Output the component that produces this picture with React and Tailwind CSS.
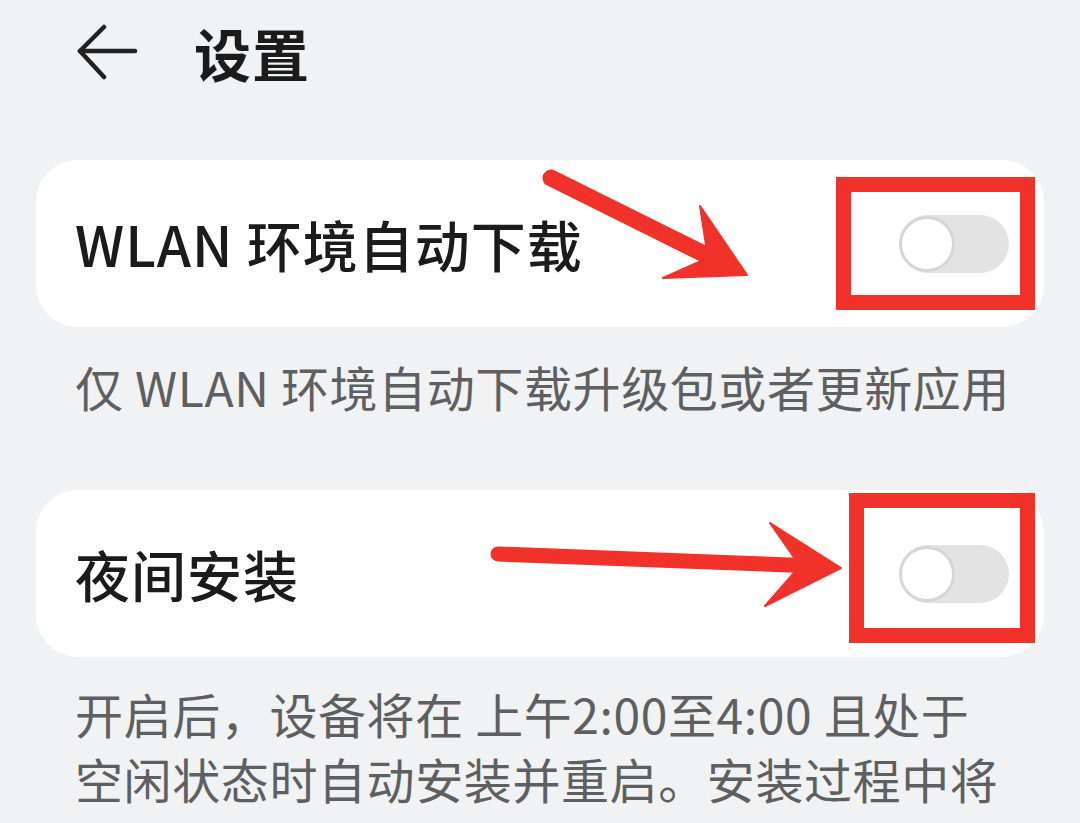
import React from 'react';

const FONT = { fontFamily: '"Noto Sans CJK SC", "Noto Sans", sans-serif' };

// Switch shown in its "off" state
const Toggle = () => (
    <div className="w-[110px] h-[58px] rounded-full bg-[#e3e3e3] flex items-center">
        <div className="w-[56px] h-[56px] rounded-full bg-white border-[3px] border-[#d6d6d6]" />
    </div>
);

const SettingCard = ({ title }) => (
    <div className="h-[167px] rounded-[42px] bg-white flex items-center justify-between pl-[39px] pr-[35px]">
        <span className="text-[55px] leading-none font-medium text-[#1b1b1b] tracking-[1px]">{title}</span>
        <Toggle />
    </div>
);

const BackArrow = () => (
    <svg width="62" height="58" viewBox="0 0 62 58" fill="none" stroke="#222" strokeWidth="4.5" strokeLinecap="round" strokeLinejoin="round">
        <path d="M27 3 L3 27 L27 53" />
        <path d="M3 27 H58" />
    </svg>
);

export default function App() {
    return (
        <div className="relative w-[1080px] h-[823px] overflow-hidden bg-[#f1f2f4]" style={FONT}>
            <div className="px-[36px]">
                {/* header */}
                <div className="h-[105px] flex items-center pl-[41px]">
                    <BackArrow />
                    <span className="ml-[55px] text-[57px] leading-none font-bold text-[#1b1b1b] tracking-[1px]">设置</span>
                </div>

                <div className="mt-[55px]">
                    <SettingCard title="WLAN 环境自动下载" />
                </div>
                <div className="pl-[39px] mt-[26px] text-[48px] leading-[66px] text-[#5e5f61] whitespace-nowrap tracking-[0.6px]">
                    仅 WLAN 环境自动下载升级包或者更新应用
                </div>

                <div className="mt-[71px]">
                    <SettingCard title="夜间安装" />
                </div>
                <div className="pl-[39px] mt-[24px] text-[48px] leading-[65px] text-[#5e5f61] whitespace-nowrap tracking-[0.6px]">
                    <div>开启后，设备将在 上午2:00至4:00 且处于</div>
                    <div>空闲状态时自动安装并重启。安装过程中将</div>
                    <div>占用较长时间，请保持电量充足。</div>
                </div>
            </div>

            {/* red annotations */}
            <div className="absolute left-[836px] top-[177px] w-[199px] h-[133px] border-[15px] border-[#f0322a]" />
            <div className="absolute left-[849px] top-[493px] w-[186px] h-[150px] border-[15px] border-[#f0322a]" />
            <svg className="absolute inset-0 pointer-events-none" width="1080" height="823" viewBox="0 0 1080 823">
                <g fill="#f0322a" stroke="#f0322a" strokeLinecap="round" strokeLinejoin="round">
                    <path d="M551 178 L712 258" strokeWidth="17" fill="none" />
                    <path d="M700 206 L747 275 L663 278 L708 258 Z" strokeWidth="2" />
                    <path d="M498 554 L818 566" strokeWidth="15" fill="none" />
                    <path d="M770 523 L841 568 L765 606 L800 566 Z" strokeWidth="2" />
                </g>
            </svg>
        </div>
    );
}
